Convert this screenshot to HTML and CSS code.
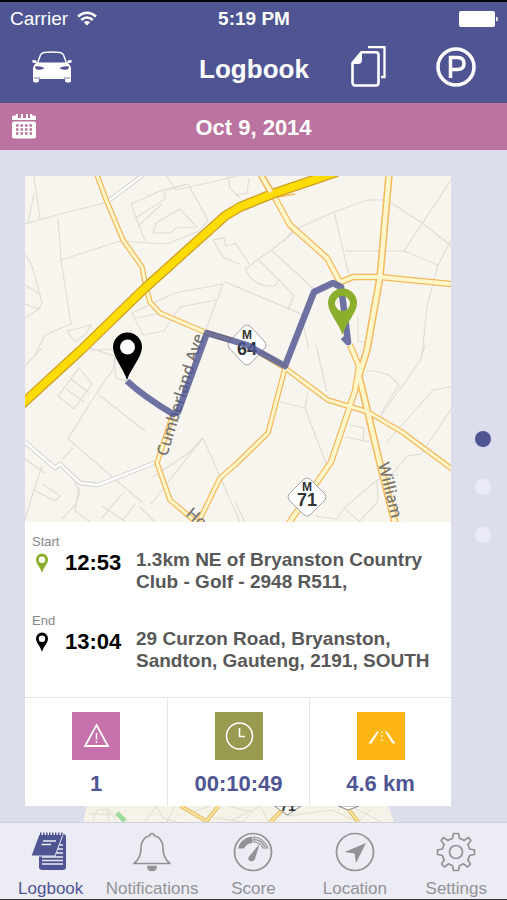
FILE: index.html
```html
<!DOCTYPE html>
<html lang="en">
<head>
<meta charset="UTF-8">
<meta name="viewport" content="width=device-width, initial-scale=1.0">
<title>Logbook</title>
<link rel="stylesheet" href="styles.css">
</head>
<body>
  <header class="top">
    <div class="status">
      <span class="carrier">Carrier
        <svg width="20" height="15" viewBox="0 0 20 15" fill="none" stroke="#fff" stroke-width="2.4"><path d="M1 5.500Q10 -2 19 5.500M4.200 9Q10 4.200 15.800 9"/><path d="M6.800 11.300Q10 8.800 13.200 11.300L10 14.500Z" fill="#fff" stroke="none"/></svg>
      </span>
      <span class="clock">5:19 PM</span>
      <svg class="battery" width="39" height="16" viewBox="0 0 39 16" fill="#fff"><rect width="36" height="16" rx="2"/><path d="M37 5.500Q39 6 39 8T37 10.500Z"/></svg>
    </div>
    <nav class="navbar">
      <button class="icon-btn" aria-label="Vehicle">
        <svg width="40" height="32" viewBox="0 0 40 32"><path d="M5.500 12L8.500 4Q9.500 1.800 12 1.500Q20 .5 28 1.500Q30.500 1.800 31.500 4L34.500 12" fill="none" stroke="#fff" stroke-width="1.500"/><path d="M0 9.500Q3 8.500 4.500 10V12H1ZM40 9.500Q37 8.500 35.500 10V12H39Z" fill="#fff"/><path d="M5 11.500H35Q39 14 39 18V30Q39 31.500 37 31.500H35Q33 31.500 33 29.500V28H7V29.500Q7 31.500 5 31.500H3Q1 31.500 1 29.500V18Q1 14 5 11.500Z" fill="#fff"/><path d="M3 15.500Q8 14.500 12.500 17Q10 19.500 5 18.500Q3 18 3 15.500ZM37 15.500Q32 14.500 27.500 17Q30 19.500 35 18.500Q37 18 37 15.500Z" fill="#4f5593"/><path d="M2 27H8M32 27H38" stroke="#4f5593" stroke-width=".8"/></svg>
      </button>
      <h1>Logbook</h1>
      <div class="nav-actions">
        <button class="icon-btn" aria-label="Trips">
          <svg width="35" height="41" viewBox="0 0 35 41" fill="none" stroke="#fff"><path d="M10.500 6.200H25Q27.500 6.200 27.500 9V36.500Q27.500 39.500 25 39.500H4.500Q1.500 39.500 1.500 36.500V17Z" stroke-width="2.600"/><path d="M17 1.200H33.500V31H30" stroke-width="2.300"/><path d="M1 18L11 5.500V14Q11 18 7 18Z" fill="#fff" stroke="none"/></svg>
        </button>
        <button class="icon-btn" aria-label="Parking">
          <svg width="40" height="40" viewBox="0 0 40 40" fill="none" stroke="#fff"><circle cx="20" cy="20" r="18" stroke-width="3.500"/><path d="M14.500 31V10.500H21.500Q28 10.500 28 16.500T21.500 22.500H15" stroke-width="3.500"/></svg>
        </button>
      </div>
    </nav>
  </header>

  <div class="datebar">
    <button class="icon-btn" aria-label="Pick a date">
      <svg width="24" height="25" viewBox="0 0 24 25"><path d="M0 6V3Q0 1.500 2 1.500H4V0H6V4H9V0H11V4H14V0H16V4H18V0H20V1.500H22Q24 1.500 24 3V6Z" fill="#fff"/><rect y="7.500" width="24" height="17" rx="2" fill="#fff"/><g fill="none" stroke="#bb739f" stroke-width="2.500" stroke-dasharray="2.500 2"><path d="M4 11.500H21M4 15.500H21M4 19.500H21"/></g></svg>
    </button>
    <h2>Oct 9, 2014</h2>
  </div>

  <main class="screen">
    <div class="trips">
      <article class="card">
        <svg class="map" viewBox="0 0 426 346" role="img" aria-label="Trip map">
          <rect width="426" height="346" fill="#f8f5ee"/>
          <!-- property outlines -->
          <g fill="none" stroke="#dedcd7" stroke-width="1.100">
            <path d="M0 48L32 39L79 27M9 0L15 43M9 18L3 47M33 42L36 84L46 148L20 159L10 178M36 84L95 65L142 68L174 55L183 44L163 8L135 15L106 28L120 65M109 43L140 23V15M113 50L137 28"/>
            <path d="M142 0L151 14L213 0M163 8L142 14M131 47L155 33L172 51L151 52L146 57H128L131 47M188 64L199 62L201 70L212 67M188 64L199 82L215 88M203 0L205 12L215 22"/>
            <path d="M0 78L7 90L17 126L14 133L0 128M0 109L13 117M0 142L14 133M42 155L66 149L61 158L50 166ZM107 137L150 117L198 108L180 156M107 137L118 159L139 155L155 131L191 124M112 142L135 137M200 106L215 112M63 174L92 173"/>
            <path d="M258 66L267 55L309 36L343 24H362L400 49L426 70M309 36L324 99M320 75H379L426 4M379 75L413 89L402 130L397 180M413 89L426 64M210 66L224 88M220 93L246 74L272 54M246 74L291 115M234 84L254 104L250 110H243Q226 108 220 92M254 104L269 120L263 134M210 110L276 138L284 174M210 19L222 17L224 2"/>
            <path d="M54 192L67 208L49 233L33 220ZM41 213L59 226M46 203L64 217M92 176L88 194L76 210L43 263L118 327M0 190L17 172M102 205L91 202L89 180L65 172M74 219L120 255M48 272L37 283M49 306L55 315L51 328L37 343M54 311L50 335L65 346M9 314L30 325L35 320L18 308M0 283L20 297M17 290L9 314L0 344M99 316L76 343M77 330L101 346M126 328L178 262L215 346M128 301L165 276L177 262M115 331L130 346M110 328L98 344"/>
            <path d="M291 169L302 216M283 215L280 232L302 290M255 226L280 232M341 195H350L364 199L374 209L356 237M400 169L395 185L352 245M426 211L408 214L361 267M426 233L396 278L382 280L365 301M325 249L339 252L338 266M320 261L345 266M374 299L352 304L319 332L312 343L290 340M352 304L353 325L334 346M319 332L335 346M333 140V165L341 166M210 326L220 346"/>
          </g>
          <!-- minor roads -->
          <g fill="none" stroke-linejoin="round">
            <path d="M0 266L30 292L35 288L55 307L73 309L132 286M118 -1L82 26" stroke="#d3d1cd" stroke-width="4.500"/>
            <path d="M0 266L30 292L35 288L55 307L73 309L132 286M118 -1L82 26" stroke="#fff" stroke-width="2.500"/>
          </g>
          <!-- main roads, casing first and fill on top -->
          <defs>
            <g id="roads">
              <path d="M72 -1L82 26L98 64L117 91L121 111L125 126L135 137L182 157L222 169L260 192M148 238L132 287L145 324L171 346M260 192L243 257L210 289L195 302L173 347M260 192L303 224L343 236L377 256L427 293"/>
            </g>
            <g id="avenues">
              <path d="M236 -1L250 22L265 49L302 82L316 108M316 106L328 101H355L427 108M325 169L334 190L330 215L306 286L264 347"/>
            </g>
            <path id="drive" d="M364 -1L355 101L342 174L334 200L343 237L356 292L370 347"/>
          </defs>
          <g fill="none" stroke="#f2b95f" stroke-linejoin="round">
            <use href="#roads" stroke-width="5.500"/>
            <use href="#avenues" stroke-width="6.500"/>
            <use href="#drive" stroke-width="7.500"/>
            <path d="M222 32L247 22L270 18M224 25L247 14L262 12" stroke-width="1.500"/>
          </g>
          <g fill="none" stroke="#fff6c9" stroke-linejoin="round">
            <use href="#roads" stroke-width="3"/>
            <use href="#avenues" stroke-width="4"/>
            <use href="#drive" stroke-width="4.500"/>
          </g>
          <!-- highway -->
          <g fill="none" stroke-linejoin="round">
            <path d="M-5 230L55 175L120 112L200 40L215 31L247 18L312 -4" stroke="#cf9e20" stroke-width="10"/>
            <path d="M-5 230L55 175L120 112L200 40L215 31L247 18L312 -4" stroke="#ffdc05" stroke-width="7.500"/>
            <path d="M236 -1L246 16" stroke="#f2b95f" stroke-width="7"/>
            <path d="M236 -1L246 16" stroke="#fff6c9" stroke-width="4"/>
          </g>
          <g class="street">
            <text transform="translate(142 281) rotate(-73)">Cumberland Ave</text>
            <text transform="translate(353 288) rotate(76)">William N</text>
            <text transform="translate(160 339) rotate(40)">Ho</text>
          </g>
          <g class="shield">
            <path d="M222 149Q224 149 226 151L240 166Q242 169 240 172L226 187Q222 191 218 187L204 172Q202 169 204 166L218 151Q220 149 222 149Z"/>
            <path d="M282 302Q284 302 286 304L300 318Q302 321 300 324L286 338Q282 342 278 338L264 324Q262 321 264 318L278 304Q280 302 282 302Z"/>
            <text class="shield-m" x="222" y="163">M</text>
            <text x="222" y="179">64</text>
            <text class="shield-m" x="282" y="315">M</text>
            <text x="282" y="330">71</text>
          </g>
          <path d="M102 205Q118 220 148 238L153 236L182 157L222 169L260 190L289 116L308 107L316 111L320 141L323 166L318 161" fill="none" stroke="#4f5593" stroke-opacity=".82" stroke-width="6.500" stroke-linejoin="round"/>
          <path fill="#000" d="M102 204C98 192 88 181 88 171A14.500 14.500 0 0 1 117 171C117 181 106 192 102 204Z"/>
          <circle cx="102.500" cy="171" r="7.500" fill="#fff"/>
          <path fill="#8bae2d" fill-rule="evenodd" d="M317.500 159C314 147 303 137 303 127A14.500 14.500 0 0 1 332 127C332 137 321 147 317.500 159ZM317.500 120A7.500 7.500 0 1 0 317.500 135A7.500 7.500 0 1 0 317.500 120Z"/>
        </svg>

        <div class="legs">
          <section class="leg">
            <h3>Start</h3>
            <svg class="pin pin-start" viewBox="0 0 14 20"><path fill-rule="evenodd" d="M7 20C5.500 14 1 11 1 6.500A6 6 0 0 1 13 6.500C13 11 8.500 14 7 20ZM7 3.500A3.200 3.200 0 1 0 7 9.900A3.200 3.200 0 1 0 7 3.500Z"/></svg>
            <time>12:53</time>
            <p>1.3km NE of Bryanston Country Club - Golf - 2948 R511,</p>
          </section>
          <section class="leg">
            <h3>End</h3>
            <svg class="pin" viewBox="0 0 14 20"><path fill-rule="evenodd" d="M7 20C5.500 14 1 11 1 6.500A6 6 0 0 1 13 6.500C13 11 8.500 14 7 20ZM7 3.500A3.200 3.200 0 1 0 7 9.900A3.200 3.200 0 1 0 7 3.500Z"/></svg>
            <time>13:04</time>
            <p>29 Curzon Road, Bryanston, Sandton, Gauteng, 2191, SOUTH</p>
          </section>
        </div>

        <ul class="stats">
          <li>
            <svg class="tile tile-alerts" viewBox="0 0 48 48" fill="none" stroke="#fff"><path d="M24.500 13L36 34H13Z" stroke-width="1.800"/><path d="M24.500 21V27.500M24.500 29V31" stroke-width="1.500"/></svg>
            <span>1</span>
          </li>
          <li>
            <svg class="tile tile-time" viewBox="0 0 48 48" fill="none" stroke="#fff" stroke-width="1.600"><circle cx="24.500" cy="24" r="13"/><path d="M24.500 16V24.500H30"/></svg>
            <span>00:10:49</span>
          </li>
          <li>
            <svg class="tile tile-distance" viewBox="0 0 48 48" fill="#fff"><path d="M20 19.500H22L14.500 31.500H11.500ZM28 19.500H30L38.500 31.500H35.500Z"/><path d="M25 19V31" stroke="#fff" stroke-width="1.200" stroke-dasharray="2 2"/></svg>
            <span>4.6 km</span>
          </li>
        </ul>
      </article>

      <!-- top of the next trip in the list -->
      <svg class="next-map" viewBox="0 0 312 16" preserveAspectRatio="none" aria-hidden="true">
        <path d="M4 0H306L312 16H0Z" fill="#f5f2e7"/>
        <path d="M10 16L14 4H26L34 16M6 8H30M24 0L26 16M62 16L74 0L80 12L94 16M92 0L84 16M110 6L128 0M132 12L160 16L170 6L146 0M150 14L178 0L186 16M204 10L250 4L276 16L290 2M268 0L300 16" fill="none" stroke="#e0ddd0"/>
        <path d="M34 7L42 15" stroke="#9fdc9f" stroke-width="5"/>
        <path d="M98 0L124 15L136 0M188 16L202 2M264 0L276 16" fill="none" stroke="#e6bd5f" stroke-width="4"/>
        <path d="M98 0L124 15L136 0M188 16L202 2M264 0L276 16" fill="none" stroke="#fbe5a4" stroke-width="2"/>
        <path d="M192 0L205 9L219 0ZM256 0L266 4L277 0Z" fill="#fff" stroke="#888"/>
        <text class="next-label" x="198" y="5">71</text>
      </svg>
    </div>

    <div class="dots">
      <button class="dot active" aria-label="Trip 1"></button>
      <button class="dot" aria-label="Trip 2"></button>
      <button class="dot" aria-label="Trip 3"></button>
    </div>
  </main>

  <nav class="tabs">
    <a href="#" class="tab active">
      <svg viewBox="0 0 40 40"><rect x="8" y="2" width="27" height="36" rx="3" fill="#4f5593"/><path d="M11 25H32M11 28.500H32M11 32H32M28 13H32M26 17H32M24 21H32" stroke="#ececf4" stroke-width="1.300"/><path d="M8 2.500H32L24 24H0Z" fill="#4f5593" stroke="#ececf4"/><path d="M12 9H25M10.500 12.500H20" stroke="#ececf4" stroke-width="1.500"/><path d="M9 2H32" stroke="#4f5593" stroke-width="3" stroke-dasharray="1.500 1.500"/></svg>
      Logbook
    </a>
    <a href="#" class="tab">
      <svg viewBox="0 0 40 40" fill="none" stroke="#929297" stroke-width="1.700"><path d="M20 1.500Q18 1.500 18 3.500Q9 6 9 16Q9 26 2 31.500H38Q31 26 31 16Q31 6 22 3.500Q22 1.500 20 1.500Z" stroke-linejoin="round"/><path d="M16 34.500H24Q24 38.500 20 38.500T16 34.500Z" fill="#929297"/></svg>
      Notifications
    </a>
    <a href="#" class="tab">
      <svg viewBox="0 0 40 40" fill="none" stroke="#929297"><circle cx="20" cy="20" r="18.500" stroke-width="1.700"/><path d="M5 16.500A15.500 15.500 0 0 1 19.500 4.500V11A10 10 0 0 0 11 16.500Z" fill="#929297" stroke="none"/><path d="M21 5A15 15 0 0 1 34.500 16H30A11 11 0 0 0 21 10Z" stroke-width="1.200"/><path d="M21 7.500A13 13 0 0 1 32 15" stroke-width="1.500"/><path d="M26.500 12L22 27Q20 30.500 17 29T16 24.500Z" fill="#929297" stroke="none"/></svg>
      Score
    </a>
    <a href="#" class="tab">
      <svg viewBox="0 0 40 40"><circle cx="20" cy="20" r="18.500" fill="none" stroke="#929297" stroke-width="1.700"/><path d="M31 11L21 31L19.500 21.500L9.500 20Z" fill="#929297"/></svg>
      Location
    </a>
    <a href="#" class="tab">
      <svg viewBox="0 0 40 40" fill="none" stroke="#929297" stroke-width="1.700" stroke-linejoin="round"><circle cx="20" cy="20" r="6.500"/><path d="M17.500 1.500H22.500L23.500 6.500Q26 7 28 8.500L32.500 5.500L35 8.500L31.800 12.500Q33 14.500 33.500 17L38.500 18V22.500L33.500 23.500Q33 26 31.800 28L34.500 32L31.500 35L27.500 31.800Q25.500 33 23.500 33.500L22.500 38.500H17.500L16.500 33.500Q14.500 33 12.500 31.800L8.500 35L5.500 32L8.200 28Q7 26 6.500 23.500L1.500 22.500V18L6.500 17Q7 14.500 8.200 12.500L5 8.500L7.500 5.500L12 8.500Q14 7 16.500 6.500Z"/></svg>
      Settings
    </a>
  </nav>
</body>
</html>
```

FILE: styles.css
```css
* {
  box-sizing: border-box;
}
body {
  margin: 0;
  min-height: 100vh;
  display: flex;
  flex-direction: column;
  background-color: #dcdeeb;
  font-family: "Liberation Sans", Arial, sans-serif;
}
h1, h2, h3, p, ul {
  margin: 0;
  padding: 0;
}
svg {
  display: block;
}
.icon-btn {
  padding: 0;
  border: none;
  background: none;
  cursor: pointer;
}

/* Status bar and title */
.top {
  background-color: #4f5593;
  color: #fff;
  border-top: 2px solid #05060c;
}
.status {
  display: grid;
  grid-template-columns: 1fr auto 1fr;
  align-items: center;
  height: 33px;
  padding: 0 9px 0 10px;
  font-size: 19px;
}
.carrier {
  display: flex;
  align-items: center;
  gap: 9px;
}
.clock {
  font-weight: bold;
}
.battery {
  justify-self: end;
}
.navbar {
  display: grid;
  grid-template-columns: 1fr auto 1fr;
  align-items: center;
  height: 68px;
  padding: 0 31px 5px 32px;
}
.navbar h1 {
  font-size: 26px;
  line-height: 32px;
  padding-top: 4px;
}
.nav-actions {
  display: flex;
  justify-content: flex-end;
  gap: 50px;
}

/* Date */
.datebar {
  display: grid;
  grid-template-columns: 1fr auto 1fr;
  align-items: center;
  height: 47px;
  padding: 0 12px;
  background-color: #bb739f;
  color: #fff;
}
.datebar .icon-btn {
  justify-self: start;
}
.datebar h2 {
  font-size: 22px;
  padding-top: 3px;
}

/* Trip card */
.screen {
  flex: 1;
  display: grid;
  grid-template-columns: 1fr 56px;
}
.trips {
  padding: 26px 0 0 25px;
}
.card {
  background-color: #fff;
}
.map {
  width: 100%;
  height: auto;
}
.street {
  font-family: "Noto Sans", sans-serif;
  font-size: 16px;
  font-weight: 500;
  fill: #77756f;
}
.shield path {
  fill: #fff;
  stroke: #a5a5a5;
}
.shield text {
  font-size: 18px;
  font-weight: bold;
  text-anchor: middle;
  fill: #333;
}
.shield .shield-m {
  font-size: 12px;
}
.legs {
  display: grid;
  gap: 21px;
  padding: 13px 7px 25px;
}
.leg {
  display: grid;
  grid-template-columns: 33px 71px 1fr;
}
.leg h3 {
  grid-column: 1 / -1;
  font-size: 13px;
  font-weight: normal;
  line-height: 14px;
  color: #858585;
}
.pin {
  width: 14px;
  height: 20px;
  margin: 4px 0 0 3px;
}
.pin-start {
  fill: #8bae2d;
}
.leg time {
  font-size: 22px;
  font-weight: bold;
  line-height: 28px;
}
.leg p {
  font-size: 19px;
  font-weight: bold;
  line-height: 22px;
  color: #585858;
}
.stats {
  display: grid;
  grid-template-columns: repeat(3, 1fr);
  list-style: none;
  border-top: 1px solid #e4e4ea;
}
.stats li {
  display: flex;
  flex-direction: column;
  align-items: center;
  gap: 10px;
  padding: 14px 0 8px;
  font-size: 22px;
  font-weight: bold;
  line-height: 28px;
  color: #4f5593;
}
.stats li + li {
  border-left: 1px solid #e4e4ea;
}
.tile {
  width: 48px;
  height: 48px;
}
.tile-alerts {
  background-color: #c571ab;
}
.tile-time {
  background-color: #999b50;
}
.tile-distance {
  background-color: #fdb515;
}
.next-map {
  width: 73%;
  height: 16px;
  margin-left: 58px;
}
.next-label {
  font-size: 14px;
  font-weight: bold;
  fill: #333;
}

/* Page dots */
.dots {
  display: flex;
  flex-direction: column;
  justify-content: center;
  gap: 32px;
  padding: 2px 0 0 24px;
}
.dot {
  width: 16px;
  height: 16px;
  padding: 0;
  border: none;
  border-radius: 50%;
  background-color: #eaebf7;
  cursor: pointer;
}
.dot.active {
  background-color: #4f5593;
}

/* Tab bar */
.tabs {
  display: grid;
  grid-template-columns: repeat(5, 1fr);
  padding-top: 9px;
  background-color: #ececf4;
  border-top: 1px solid #cfd0dc;
  border-bottom: 1px solid #333;
}
.tab {
  display: flex;
  flex-direction: column;
  align-items: center;
  gap: 7px;
  font-size: 17px;
  line-height: 20px;
  color: #929297;
  text-decoration: none;
}
.tab.active {
  color: #4f5593;
}
.tab svg {
  width: 40px;
  height: 40px;
}
```
